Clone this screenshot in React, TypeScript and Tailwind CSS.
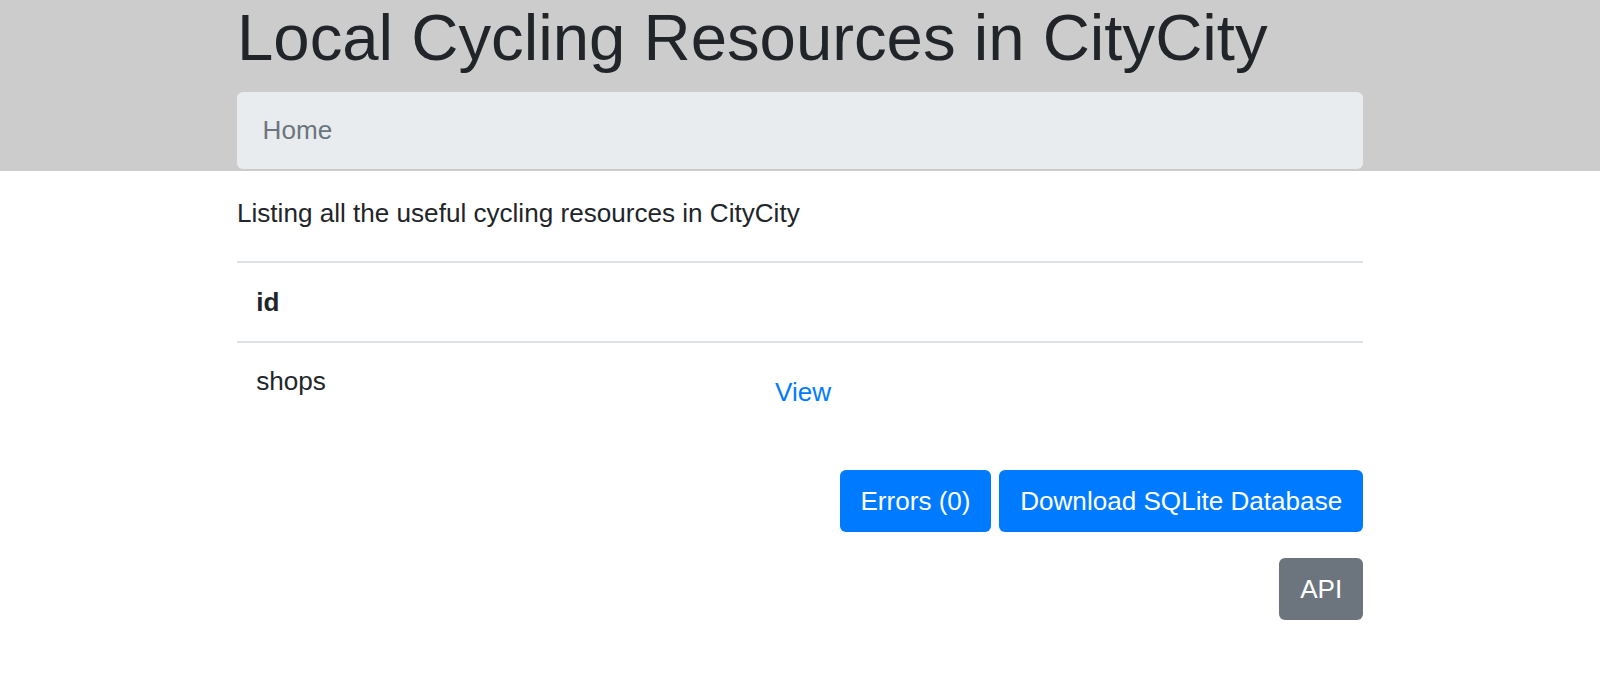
export default function App() {
  return (
    <div className="min-h-[700px] bg-white text-[#212529] font-['Liberation_Sans',Arial,sans-serif] text-[26.1px] leading-[38.4px]">
      <header className="bg-[#cccccc]">
        <div className="mx-auto w-[1126px] pb-[2px]">
          <h1 className="mb-[15px] text-[65.3px] leading-[76.8px] font-normal">Local Cycling Resources in CityCity</h1>
          <nav className="rounded-[6px] bg-[#e9ecef] px-[25.6px] py-[19.2px] text-[#6c757d]">Home</nav>
        </div>
      </header>

      <main className="mx-auto w-[1126px]">
        <p className="mt-[23px]">Listing all the useful cycling resources in CityCity</p>

        <table className="mt-[29px] w-full border-collapse">
          <thead>
            <tr className="border-t-2 border-[#dee2e6]">
              <th className="w-[498px] px-[19.2px] py-[19.8px] text-left font-bold">id</th>
              <th className="px-[19.2px] py-[19.8px]"></th>
            </tr>
          </thead>
          <tbody>
            <tr className="border-t-2 border-[#dee2e6]">
              <td className="p-[19.2px] align-top">shops</td>
              <td className="p-[19.2px] align-top">
                <a href="#" className="inline-block px-[20.8px] py-[11.2px] text-[#007bff]">View</a>
              </td>
            </tr>
          </tbody>
        </table>

        <div className="mt-[28px] flex justify-end gap-[8px]">
          <button className="h-[62px] rounded-[6px] bg-[#007bff] px-[20.8px] text-white">Errors (0)</button>
          <button className="h-[62px] rounded-[6px] bg-[#007bff] px-[20.8px] text-white">Download SQLite Database</button>
        </div>
        <div className="mt-[26px] flex justify-end">
          <button className="h-[62px] rounded-[6px] bg-[#6c757d] px-[20.8px] text-white">API</button>
        </div>
      </main>
    </div>
  );
}
